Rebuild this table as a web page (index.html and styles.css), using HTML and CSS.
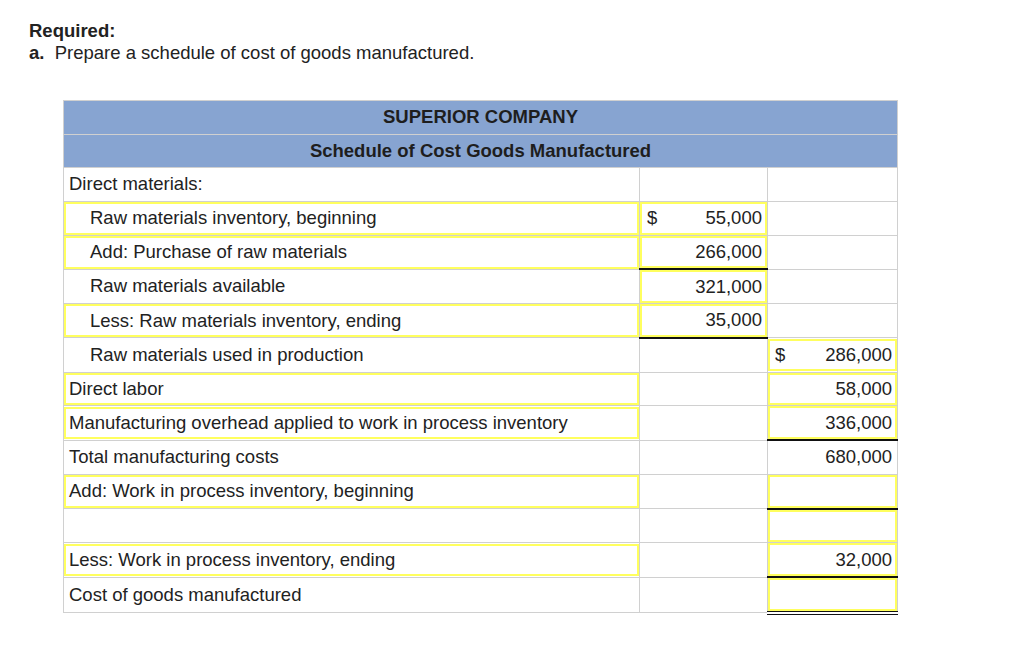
FILE: index.html
```html
<!DOCTYPE html>
<html>
<head>
<meta charset="utf-8">
<link rel="stylesheet" href="styles.css">
</head>
<body>
<div class="intro">
  <div class="req">Required:</div>
  <div class="task"><b>a.</b>&nbsp; Prepare a schedule of cost of goods manufactured.</div>
</div>
<table class="sched">
  <colgroup><col class="c1"><col class="c2"><col class="c3"></colgroup>
  <tr class="hd"><td colspan="3">SUPERIOR COMPANY</td></tr>
  <tr class="hd"><td colspan="3">Schedule of Cost Goods Manufactured</td></tr>
  <tr><td class="lbl">Direct materials:</td><td></td><td></td></tr>
  <tr><td class="in"><div class="box lbl ind">Raw materials inventory, beginning</div></td><td class="in"><div class="box num"><span>$</span><span>55,000</span></div></td><td></td></tr>
  <tr><td class="in"><div class="box lbl ind">Add: Purchase of raw materials</div></td><td class="in tot"><div class="box num"><span></span><span>266,000</span></div></td><td></td></tr>
  <tr><td class="lbl ind">Raw materials available</td><td class="in"><div class="box num"><span></span><span>321,000</span></div></td><td></td></tr>
  <tr><td class="in"><div class="box lbl ind">Less: Raw materials inventory, ending</div></td><td class="in tot"><div class="box num"><span></span><span>35,000</span></div></td><td></td></tr>
  <tr><td class="lbl ind">Raw materials used in production</td><td></td><td class="in"><div class="box num"><span>$</span><span>286,000</span></div></td></tr>
  <tr><td class="in"><div class="box lbl">Direct labor</div></td><td></td><td class="in"><div class="box num"><span></span><span>58,000</span></div></td></tr>
  <tr><td class="in"><div class="box lbl">Manufacturing overhead applied to work in process inventory</div></td><td></td><td class="in tot"><div class="box num"><span></span><span>336,000</span></div></td></tr>
  <tr><td class="lbl">Total manufacturing costs</td><td></td><td class="numc">680,000</td></tr>
  <tr><td class="in"><div class="box lbl">Add: Work in process inventory, beginning</div></td><td></td><td class="in tot"><div class="box num"><span></span><span></span></div></td></tr>
  <tr><td class="lbl"></td><td></td><td class="in"><div class="box num"><span></span><span></span></div></td></tr>
  <tr><td class="in"><div class="box lbl">Less: Work in process inventory, ending</div></td><td></td><td class="in tot"><div class="box num"><span></span><span>32,000</span></div></td></tr>
  <tr><td class="lbl">Cost of goods manufactured</td><td></td><td class="in dbl"><div class="box num"><span></span><span></span></div></td></tr>
</table>
</body>
</html>
```

FILE: styles.css
```css
html, body {
  margin: 0;
  padding: 0;
  background: #fff;
}
body {
  font-family: "Liberation Sans", Arial, Helvetica, sans-serif;
  font-size: 18.5px;
  color: #222;
}
.intro {
  padding: 20px 0 0 29px;
  line-height: 22px;
}
.req {
  font-weight: bold;
}
.task b {
  font-weight: bold;
}
.sched {
  margin: 36px 0 0 63px;
  width: 834px;
  border-collapse: collapse;
  table-layout: fixed;
}
.c1 { width: 576px; }
.c2 { width: 128px; }
.c3 { width: 130px; }
.sched td {
  border: 1px solid #d0d0d0;
  height: 32.75px;
  padding: 0;
  vertical-align: middle;
  line-height: 20px;
}
.sched tr.hd td {
  background: #87a4d1;
  text-align: center;
  font-weight: bold;
  height: 32.5px;
  color: #1e1e1e;
}
.sched td.lbl {
  padding-left: 5px;
}
.sched td.lbl.ind {
  padding-left: 26px;
}
.box {
  box-sizing: border-box;
  height: 32.75px;
  border: 2px solid #ffff5e;
  display: flex;
  align-items: center;
}
.box.lbl {
  padding-left: 3px;
}
.box.lbl.ind {
  padding-left: 24px;
}
.box.num {
  justify-content: space-between;
  padding: 0 3px 0 5px;
}
.sched td.numc {
  text-align: right;
  padding-right: 5px;
}
.sched td.tot {
  border-bottom: 2px solid #111;
}
.sched td.dbl {
  border-bottom: 4px double #111;
}
```
